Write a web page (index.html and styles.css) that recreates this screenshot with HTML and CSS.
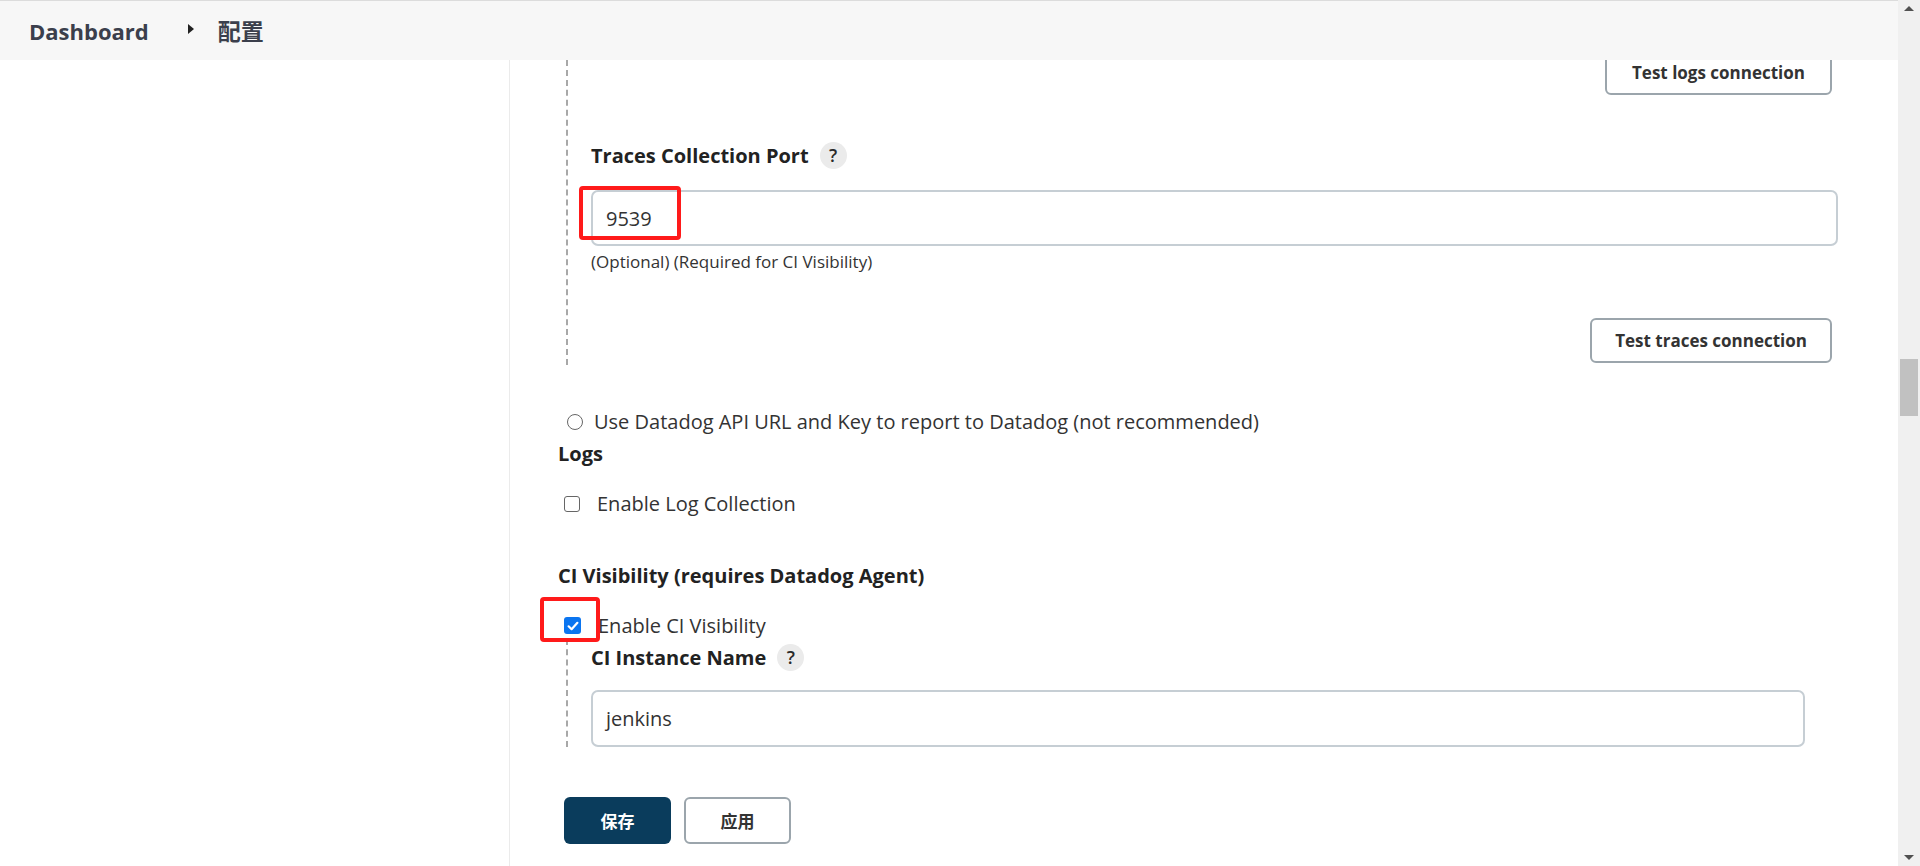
FILE: index.html
```html
<!DOCTYPE html>
<html lang="zh">
<head>
<meta charset="utf-8">
<title>配置</title>
<link rel="stylesheet" href="styles.css">
</head>
<body>
<div class="page">
  <header class="topbar">
    <span class="crumb">Dashboard</span>
    <span class="crumb-arrow"></span>
    <span class="crumb crumb-cjk">配置</span>
  </header>
  <div class="content">
    <aside class="sidebar"></aside>
    <main class="main">
      <div class="nested nested-top">
        <div class="btn-row btn-row-first">
          <button class="btn btn-outline">Test logs connection</button>
        </div>
        <div class="field-label">Traces Collection Port <span class="help">?</span></div>
        <div class="input-wrap">
          <div class="text-input">9539</div>
          <div class="mark mark-input"></div>
        </div>
        <div class="hint">(Optional) (Required for CI Visibility)</div>
        <div class="btn-row btn-row-traces">
          <button class="btn btn-outline btn-traces">Test traces connection</button>
        </div>
      </div>

      <div class="radio-row">
        <span class="radio"></span>
        <span>Use Datadog API URL and Key to report to Datadog (not recommended)</span>
      </div>
      <div class="section-title">Logs</div>
      <div class="check-row check-row-logs">
        <span class="checkbox"></span>
        <span>Enable Log Collection</span>
      </div>

      <div class="section-title section-ci">CI Visibility (requires Datadog Agent)</div>
      <div class="check-row check-row-ci">
        <span class="checkbox checked">
          <svg viewBox="0 0 16 16" width="16" height="16"><path d="M3.6 8.3 L6.6 11.2 L12.4 4.8" fill="none" stroke="#fff" stroke-width="2.2" stroke-linecap="round" stroke-linejoin="round"/></svg>
        </span>
        <span>Enable CI Visibility</span>
        <div class="mark mark-check"></div>
      </div>
      <div class="nested nested-ci">
        <div class="field-label field-label-ci">CI Instance Name <span class="help">?</span></div>
        <div class="input-wrap input-wrap-ci">
          <div class="text-input text-input-ci">jenkins</div>
        </div>
      </div>

      <div class="actions">
        <button class="btn btn-primary">保存</button>
        <button class="btn btn-secondary">应用</button>
      </div>
    </main>
  </div>
</div>
<div class="scrollbar">
  <span class="sb-arrow sb-up"></span>
  <div class="sb-track"><div class="sb-thumb"></div></div>
  <span class="sb-arrow sb-down"></span>
</div>
</body>
</html>
```

FILE: styles.css
```css
html, body {
  margin: 0;
  padding: 0;
  height: 866px;
  overflow: hidden;
}

body {
  display: flex;
  font-family: "Open Sans", "Noto Sans", "Noto Sans CJK SC", sans-serif;
  color: #333;
  background: #fff;
}

.page {
  flex: 1;
  display: flex;
  flex-direction: column;
  min-width: 0;
}

.topbar {
  height: 59px;
  flex: 0 0 auto;
  border-top: 1px solid #dcdcdc;
  background: #f7f7f7;
  display: flex;
  align-items: center;
  padding-left: 29px;
  position: relative;
  z-index: 2;
}

.crumb {
  font-size: 22px;
  font-weight: 700;
  color: #3b3f4c;
  line-height: 1;
}

.crumb-cjk {
  font-family: "Noto Sans CJK SC", sans-serif;
  font-size: 23px;
  color: #3b3f4c;
}

.crumb-arrow {
  width: 0;
  height: 0;
  border-top: 5px solid transparent;
  border-bottom: 5px solid transparent;
  border-left: 6px solid #222;
  margin: 0 24px 4px 39px;
}

.content {
  flex: 1;
  display: flex;
  overflow: hidden;
}

.sidebar {
  width: 509px;
  flex: 0 0 auto;
  border-right: 1px solid #ebebeb;
}

.main {
  flex: 1;
  padding-left: 48px;
  padding-right: 60px;
  font-size: 20px;
  line-height: 27px;
}

.nested {
  margin-left: 8px;
  border-left: 2px dashed #a8a8a8;
  padding-left: 23px;
}

.nested-top {
  margin-top: -10px;
  padding-bottom: 2px;
}

.btn-row {
  display: flex;
  justify-content: flex-end;
  padding-right: 6px;
}

.btn {
  font-family: "Open Sans", "Noto Sans", "Noto Sans CJK SC", sans-serif;
  font-weight: 700;
  font-size: 17px;
  border-radius: 6px;
  cursor: pointer;
}

.btn-outline {
  height: 45px;
  padding: 0 25px;
  background: #fff;
  border: 2.5px solid #9ba5ac;
  color: #333;
}

.btn-traces {
  padding: 0 23px;
}

.btn-row-traces {
  margin-top: 47px;
}

.field-label {
  font-weight: 700;
  font-size: 20px;
  margin-top: 47px;
  display: flex;
  align-items: center;
  gap: 11px;
  color: #222;
}

.help {
  display: inline-flex;
  align-items: center;
  justify-content: center;
  width: 27px;
  height: 27px;
  border-radius: 50%;
  background: #ebebeb;
  color: #2a2a2a;
  font-weight: 600;
  font-size: 18px;
}

.input-wrap {
  position: relative;
  margin-top: 21px;
}

.text-input {
  height: 52px;
  border: 2px solid #c6ced4;
  border-radius: 7px;
  padding: 0 13px;
  display: flex;
  align-items: center;
  font-size: 20px;
  color: #333;
}

.input-wrap-ci {
  margin-right: 33px;
  margin-top: 19px;
}

.text-input-ci {
  height: 53px;
}

.hint {
  font-size: 17px;
  line-height: 18px;
  margin-top: 7px;
  color: #333;
}

.mark {
  position: absolute;
  border: 4px solid #ff1a1a;
  border-radius: 4px;
  box-sizing: border-box;
  pointer-events: none;
}

.mark-input {
  left: -12px;
  top: -4px;
  width: 102px;
  height: 54px;
}

.radio-row,
.check-row {
  display: flex;
  align-items: center;
  position: relative;
}

.radio-row {
  margin-top: 43px;
  padding-left: 9px;
  gap: 11px;
}

.radio {
  width: 14px;
  height: 14px;
  border: 1.5px solid #666;
  border-radius: 50%;
}

.section-title {
  font-weight: 700;
  font-size: 20px;
  margin-top: 5px;
  color: #222;
}

.section-ci {
  margin-top: 45px;
}

.check-row {
  padding-left: 6px;
  gap: 17px;
}

.check-row-logs {
  margin-top: 23px;
}

.check-row-ci {
  margin-top: 23px;
}

.checkbox {
  width: 14px;
  height: 14px;
  border: 1.5px solid #666;
  border-radius: 3px;
  display: inline-flex;
  align-items: center;
  justify-content: center;
}

.checkbox.checked {
  width: 17px;
  height: 17px;
  border: none;
  background: #0b75f0;
}

.mark-check {
  left: -18px;
  top: -15px;
  width: 60px;
  height: 45px;
}

.nested-ci {
  padding-top: 5px;
}

.field-label-ci {
  margin-top: 0;
}

.actions {
  display: flex;
  gap: 13px;
  margin-top: 50px;
  padding-left: 6px;
}

.btn-primary,
.btn-secondary {
  width: 107px;
  height: 47px;
  font-family: "Noto Sans CJK SC", sans-serif;
  font-size: 17px;
}

.btn-primary {
  background: #0a3c5c;
  border: none;
  color: #fff;
}

.btn-secondary {
  background: #fff;
  border: 2.5px solid #9ba5ac;
  color: #333;
}

.scrollbar {
  width: 22px;
  flex: 0 0 auto;
  background: #f0f0f0;
  display: flex;
  flex-direction: column;
  align-items: center;
}

.sb-arrow {
  width: 0;
  height: 0;
  border-left: 5px solid transparent;
  border-right: 5px solid transparent;
  flex: 0 0 auto;
}

.sb-up {
  border-bottom: 5px solid #505050;
  margin: 6px 0 8px;
}

.sb-down {
  border-top: 5px solid #505050;
  margin: 8px 0 6px;
}

.sb-track {
  flex: 1;
  width: 100%;
  padding-top: 340px;
  box-sizing: border-box;
}

.sb-thumb {
  margin: 0 2px;
  height: 57px;
  background: #c1c1c1;
}
```
